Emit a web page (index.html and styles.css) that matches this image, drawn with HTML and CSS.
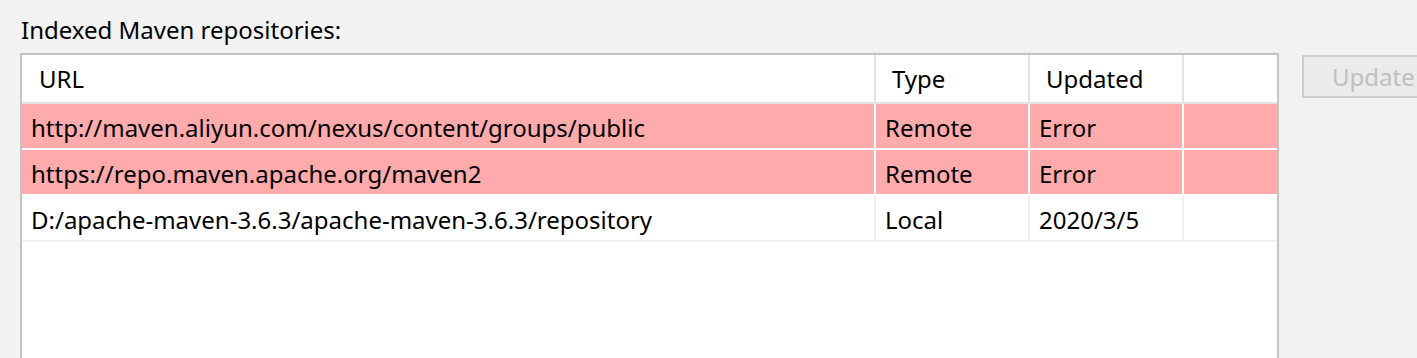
FILE: index.html
```html
<!DOCTYPE html>
<html lang="en">
<head>
  <meta charset="UTF-8">
  <title>Maven Repositories</title>
  <link rel="stylesheet" href="styles.css">
</head>
<body>

  <!-- Indexed repositories panel -->
  <div class="panel">
    <div class="label">Indexed Maven repositories:</div>
    <div class="row">
      <div class="list">
        <table class="repos">
          <thead>
            <tr>
              <th class="col-url">URL</th>
              <th class="col-type">Type</th>
              <th class="col-updated">Updated</th>
              <th class="col-extra"></th>
            </tr>
          </thead>
          <tbody>
            <tr class="error">
              <td>http://maven.aliyun.com/nexus/content/groups/public</td>
              <td>Remote</td>
              <td>Error</td>
              <td></td>
            </tr>
            <tr class="error">
              <td>https://repo.maven.apache.org/maven2</td>
              <td>Remote</td>
              <td>Error</td>
              <td></td>
            </tr>
            <tr>
              <td>D:/apache-maven-3.6.3/apache-maven-3.6.3/repository</td>
              <td>Local</td>
              <td>2020/3/5</td>
              <td></td>
            </tr>
          </tbody>
        </table>
      </div>
      <button class="update" disabled>Update</button>
    </div>
  </div>

</body>
</html>
```

FILE: styles.css
```css
/* Global Styles */
body {
  margin: 0;
  padding: 0;
  background: #f2f2f2;
  font-family: 'Noto Sans', sans-serif;
  font-size: 24px;
  color: #000;
  overflow: hidden;
  height: 358px;
}

.panel {
  padding: 14px 0 0 20px;
}

.label {
  line-height: 32px;
  margin-left: 1px;
  margin-bottom: 7px;
}

.row {
  display: flex;
  align-items: flex-start;
  gap: 23px;
}

/* Repository list */
.list {
  width: 1255px;
  height: 320px;
  flex-shrink: 0;
  background: #fff;
  border: 2px solid #c3c3c3;
}

.repos {
  border-collapse: separate;
  border-spacing: 0;
  width: 100%;
  table-layout: fixed;
}

.repos th {
  height: 47px;
  line-height: 47px;
  padding: 0 0 0 16px;
  font-weight: normal;
  text-align: left;
  border-right: 2px solid #e3e3e3;
  border-bottom: 2px solid #e3e3e3;
  white-space: nowrap;
}

.repos th.col-url {
  width: 835px;
  padding-left: 17px;
}

.repos th.col-type,
.repos th.col-updated {
  width: 136px;
}

.repos th:last-child,
.repos td:last-child {
  border-right: none;
}

.repos td {
  box-sizing: border-box;
  height: 46px;
  padding: 3px 9px 0 9px;
  line-height: 41px;
  white-space: nowrap;
  border-right: 2px solid #f0f0f0;
  border-bottom: 2px solid #f0f0f0;
}

.repos tr.error td {
  background: #ffabab;
  border-color: #fff;
}

/* Disabled button */
.update {
  margin-top: 2px;
  height: 43px;
  padding: 0 20px 0 28px;
  background: #ebebeb;
  border: 2px solid #cfcfcf;
  color: #bfbfbf;
  font-family: inherit;
  font-size: 24px;
  line-height: 37px;
  flex-shrink: 0;
}
```
